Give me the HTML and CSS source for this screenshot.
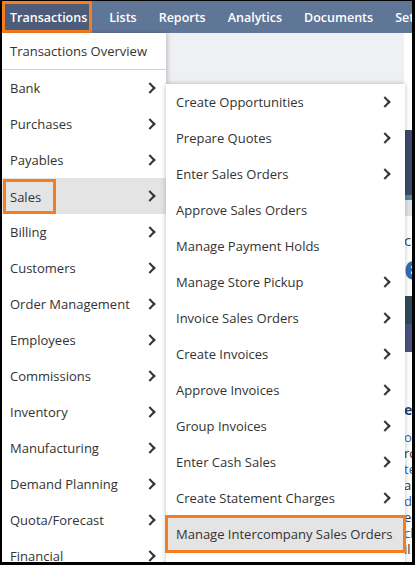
FILE: index.html
```html
<!DOCTYPE html>
<html lang="en">
<head>
  <meta charset="UTF-8" />
  <title>Transactions menu</title>
  <link rel="stylesheet" href="styles.css">
</head>
<body>
  <div class="screen">
    <div class="navbar">
      <div class="nav-item active">Transactions</div>
      <div class="nav-item">Lists</div>
      <div class="nav-item">Reports</div>
      <div class="nav-item">Analytics</div>
      <div class="nav-item">Documents</div>
      <div class="nav-item">Setup</div>
    </div>

    <div class="page">
      <div class="content">
        <div class="banner"></div>
        <div class="banner-strip"></div>
        <div class="banner-foot"></div>
        <div class="heading">co</div>
        <div class="big-e">e</div>
        <div class="tile tile-teal"></div>
        <div class="tile tile-blue"></div>
        <div class="title">er</div>
        <div class="lines">
          <span class="blue">or</span>
          <span>rc</span>
          <span class="blue">te</span>
          <span>a</span>
          <span class="blue">d</span>
          <span>ed</span>
          <span class="blue">cl</span>
          <span>il</span>
        </div>
      </div>
    </div>

    <ul class="menu main-menu">
      <li class="overview">Transactions Overview</li>
      <li>Bank <span class="chev"></span></li>
      <li>Purchases <span class="chev"></span></li>
      <li>Payables <span class="chev"></span></li>
      <li class="hover"><span class="mark">Sales</span> <span class="chev"></span></li>
      <li>Billing <span class="chev"></span></li>
      <li>Customers <span class="chev"></span></li>
      <li>Order Management <span class="chev"></span></li>
      <li>Employees <span class="chev"></span></li>
      <li>Commissions <span class="chev"></span></li>
      <li>Inventory <span class="chev"></span></li>
      <li>Manufacturing <span class="chev"></span></li>
      <li>Demand Planning <span class="chev"></span></li>
      <li>Quota/Forecast <span class="chev"></span></li>
      <li>Financial <span class="chev"></span></li>
    </ul>

    <ul class="menu sub-menu">
      <li>Create Opportunities <span class="chev"></span></li>
      <li>Prepare Quotes <span class="chev"></span></li>
      <li>Enter Sales Orders <span class="chev"></span></li>
      <li>Approve Sales Orders</li>
      <li>Manage Payment Holds</li>
      <li>Manage Store Pickup <span class="chev"></span></li>
      <li>Invoice Sales Orders <span class="chev"></span></li>
      <li>Create Invoices <span class="chev"></span></li>
      <li>Approve Invoices <span class="chev"></span></li>
      <li>Group Invoices <span class="chev"></span></li>
      <li>Enter Cash Sales <span class="chev"></span></li>
      <li>Create Statement Charges <span class="chev"></span></li>
      <li class="hover boxed">Manage Intercompany Sales Orders</li>
      <li></li>
    </ul>
  </div>
</body>
</html>
```

FILE: styles.css
```css
html, body {
  margin: 0;
  background: #000;
  overflow: hidden;
}

.screen {
  position: relative;
  margin: 1px 3px 0 2px;
  height: 561px;
  background: #eef0f4;
  overflow: hidden;
  font-family: "Open Sans", sans-serif;
  font-size: 13px;
  color: #333;
}

.navbar {
  display: flex;
  height: 32px;
  background: #607696;
  white-space: nowrap;
}

.nav-item {
  display: flex;
  align-items: center;
  padding: 0 11px;
  color: #fff;
  font-size: 12.5px;
  font-weight: 600;
}

.nav-item.active {
  background: #4d5c79;
  border: 3px solid #f47d22;
  padding: 0 2px 0 5px;
  margin-right: 6px;
}

/* page content peeking out behind the menus */
.page {
  height: 529px;
  display: flex;
  justify-content: flex-end;
}

.content {
  width: 8px;
  background: #fff;
  padding-top: 97px;
  display: flex;
  flex-direction: column;
  overflow: hidden;
}

.banner {
  height: 65px;
  background: #3e4a6c;
}

.banner-strip {
  height: 5px;
  background: #5a8798;
}

.banner-foot {
  height: 16px;
  background: #dfe3e8;
}

.heading {
  margin-top: 16px;
  font-size: 15px;
  line-height: 16px;
  color: #444;
}

.big-e {
  margin-top: 4px;
  font-size: 34px;
  line-height: 30px;
  font-weight: 700;
  color: #2d6db4;
}

.tile {
  height: 28px;
}

.tile-teal {
  margin-top: 14px;
  background: #2f4b5b;
}

.tile-blue {
  background: #4b527f;
}

.title {
  margin-top: 48px;
  font-weight: 700;
  font-size: 14px;
  color: #1b3f73;
}

.lines {
  margin-top: 10px;
  display: flex;
  flex-direction: column;
  line-height: 16px;
  font-size: 13px;
  color: #333;
}

.lines .blue {
  color: #2d5fa8;
}

.menu {
  position: absolute;
  margin: 0;
  padding: 0;
  list-style: none;
  background: #fff;
}

.menu li {
  display: flex;
  align-items: center;
  justify-content: space-between;
  height: 36px;
  white-space: nowrap;
}

.main-menu {
  top: 32px;
  left: 0;
  width: 164px;
  box-shadow: 2px 0 4px rgba(0, 0, 0, 0.18);
}

.main-menu li {
  padding: 0 9px 0 8px;
}

.main-menu li.overview {
  border-bottom: 1px solid #cfd2d6;
}

.sub-menu {
  top: 83px;
  left: 164px;
  width: 239px;
  box-shadow: 0 0 5px rgba(0, 0, 0, 0.25);
}

.sub-menu li {
  padding: 0 13px 0 10px;
}

.menu li.hover {
  background: #e4e4e4;
}

.mark {
  margin-left: -7px;
  padding: 6px 12px 5px 4px;
  border: 3px solid #f47d22;
}

.sub-menu li.boxed {
  outline: 3px solid #f47d22;
  outline-offset: -2px;
}

.chev {
  width: 6px;
  height: 6px;
  border-top: 2px solid #333;
  border-right: 2px solid #333;
  transform: rotate(45deg);
  margin-right: 3px;
}
```
